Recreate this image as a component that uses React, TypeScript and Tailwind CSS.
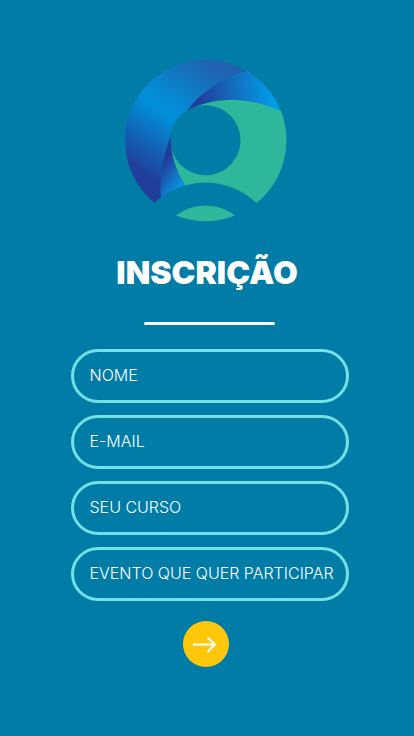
import React from "react";

const fields = [
  { id: "nome", label: "NOME", type: "text" },
  { id: "email", label: "E-MAIL", type: "email" },
  { id: "curso", label: "SEU CURSO", type: "text" },
  { id: "evento", label: "EVENTO QUE QUER PARTICIPAR", type: "text" },
];

function Logo() {
  return (
    <svg viewBox="124 59 163 163" className="mr-[3px] size-[163px]" role="img" aria-label="Logo">
      <defs>
        <linearGradient id="ring" gradientUnits="userSpaceOnUse" x1="142" y1="172" x2="218" y2="60">
          <stop offset="0" stopColor="#213f9a" />
          <stop offset="0.45" stopColor="#008fd8" />
          <stop offset="0.55" stopColor="#048bd3" />
          <stop offset="0.93" stopColor="#1f64b1" />
          <stop offset="1" stopColor="#2163b0" />
        </linearGradient>
        <linearGradient id="top" gradientUnits="userSpaceOnUse" x1="198" y1="100" x2="276" y2="90">
          <stop offset="0" stopColor="#213d99" />
          <stop offset="0.5" stopColor="#1270c0" />
          <stop offset="1" stopColor="#00a0ec" />
        </linearGradient>
        <linearGradient id="fold" gradientUnits="userSpaceOnUse" x1="162" y1="165" x2="184" y2="180">
          <stop offset="0" stopColor="#213d99" />
          <stop offset="1" stopColor="#0a92e0" />
        </linearGradient>
      </defs>
      <path
        d="M281 111 A81 81 0 0 1 256.500 203 A73.700 73.700 0 0 0 185 185.500 C177 172 171 158 170.500 140 A35 35 0 1 0 187 110.500 C215 96 248 96 281 111Z"
        fill="#2eb89b"
      />
      <path
        d="M154.500 203 A81 81 0 0 1 205.500 59.500 A81 81 0 0 1 247 71 C222 78 201 92 187 110.500 A35 35 0 0 0 170.500 137 C163 155 160 175 161 197.500 Q157.500 200 154.500 203Z"
        fill="url(#ring)"
      />
      <path
        d="M247 71 A81 81 0 0 1 281 111 C248 96 215 96 187 110.500 C201 92 222 78 247 71Z"
        fill="url(#top)"
      />
      <path
        d="M170.500 137 C171 158 177 172 185.500 185.500 Q172 189 161 197.500 C160 175 163 155 170.500 137Z"
        fill="url(#fold)"
      />
      <path d="M176 215.500 A48.500 48.500 0 0 1 235 215.500 A81 81 0 0 1 176 215.500Z" fill="#2eb89b" />
    </svg>
  );
}

export default function App() {
  return (
    <main className="flex min-h-screen flex-col items-center bg-[#007ca7] px-4 pt-[59px] pb-16 font-['Inter','Liberation_Sans',sans-serif] text-white">
      <header className="flex flex-col items-center">
        <Logo />
        <h1 className="mt-[31px] text-[32px] leading-10 font-black">INSCRIÇÃO</h1>
      </header>
      <form className="flex w-full flex-col items-center pl-[5px]" onSubmit={(e) => e.preventDefault()}>
        <div className="mt-[29px] h-[3px] w-[131px] rounded-full bg-white" />
        <div className="mt-6 flex w-full max-w-[278px] flex-col gap-3">
          {fields.map((f) => (
            <input
              key={f.id}
              id={f.id}
              name={f.id}
              type={f.type}
              aria-label={f.label}
              placeholder={f.label}
              className="h-[54px] w-full rounded-full border-3 border-[#72e0e4] bg-transparent pb-0.5 pl-4 text-base font-light outline-none placeholder:text-white"
            />
          ))}
        </div>
        <button
          type="submit"
          aria-label="Enviar"
          className="mt-5 mr-2 flex size-[46px] items-center justify-center rounded-full bg-[#ffc70a]"
        >
          <svg viewBox="0 0 46 46" className="size-[46px]" fill="none" stroke="white" strokeWidth="2">
            <path d="M10 23.500H32M24.500 16.500L32 23.500L24.500 31" />
          </svg>
        </button>
      </form>
    </main>
  );
}
